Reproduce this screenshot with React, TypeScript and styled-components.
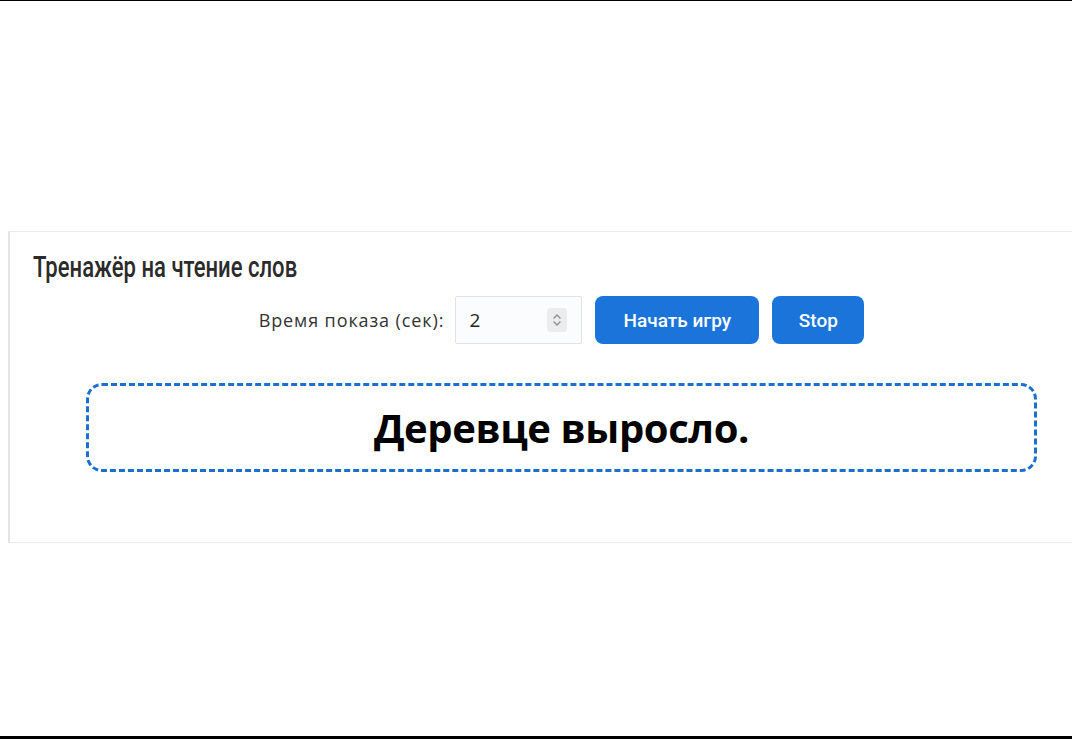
import React from "react";
import styled, {createGlobalStyle} from "styled-components";

const GlobalStyle = createGlobalStyle`
  html, body {
    margin: 0;
    padding: 0;
    background: #fff;
    overflow: hidden;
  }
`;

export default function App() {
    return (
    <Frame>
        <GlobalStyle />
        <Panel>
            <TitleRow>
                <Title>Тренажёр на чтение слов</Title>
            </TitleRow>
            <Controls>
                <Label htmlFor="show-time">Время показа (сек):</Label>
                <NumberBox>
                    <NumberValue id="show-time">2</NumberValue>
                    <Spinner>
                        <svg width="10" height="16" viewBox="0 0 10 16" fill="none" stroke="#8a8f96" strokeWidth="1.4" strokeLinecap="round" strokeLinejoin="round">
                            <path d="M2 6 L5 3 L8 6" />
                            <path d="M2 10 L5 13 L8 10" />
                        </svg>
                    </Spinner>
                </NumberBox>
                <Button $wide>Начать игру</Button>
                <Button>Stop</Button>
            </Controls>
            <WordBox>
                <Word>Деревце выросло.</Word>
            </WordBox>
        </Panel>
    </Frame>
    );
}

const Frame = styled.div`
    height: 739px;
    box-sizing: border-box;
    border-top: 1px solid #000;
    border-bottom: 3px solid #000;
    padding-top: 230px;
    padding-left: 8px;
    overflow: hidden;
`;

const Panel = styled.div`
    width: 1106px;
    box-sizing: border-box;
    border: 1px solid #ebebeb;
    border-left: 2px solid #e4e4e4;
    padding: 21px 0 70px;
    display: flex;
    flex-direction: column;
`;

const TitleRow = styled.div`
    padding-left: 23px;
    height: 29px;
`;

// no condensed face installed, so squeeze Roboto horizontally
const Title = styled.div`
    display: inline-block;
    font-family: Roboto, "Liberation Sans", sans-serif;
    font-weight: 500;
    font-size: 30px;
    line-height: 27px;
    color: #2b2b2b;
    transform: scaleX(0.735);
    transform-origin: left center;
    white-space: nowrap;
`;

const Controls = styled.div`
    display: flex;
    align-items: center;
    justify-content: center;
    margin-top: 14px;
    gap: 13px;
`;

const Label = styled.label`
    font-family: "Open Sans", "Noto Sans", sans-serif;
    font-size: 18px;
    letter-spacing: 0.9px;
    color: #333;
    margin-right: -2px;
`;

const NumberBox = styled.div`
    width: 127px;
    height: 48px;
    box-sizing: border-box;
    border: 1px solid #dfe4ea;
    border-radius: 2px;
    background: #fbfcfd;
    display: flex;
    align-items: center;
    justify-content: space-between;
    padding: 0 14px 0 13px;
`;

const NumberValue = styled.span`
    font-family: "Open Sans", "Noto Sans", sans-serif;
    font-size: 19px;
    color: #222;
`;

const Spinner = styled.span`
    width: 20px;
    height: 24px;
    border-radius: 4px;
    background: #ececee;
    display: flex;
    align-items: center;
    justify-content: center;
`;

const Button = styled.button<{$wide?: boolean}>`
    height: 48px;
    min-width: ${p => p.$wide ? 164 : 92}px;
    border: none;
    border-radius: 8px;
    background: #1b74da;
    color: #fff;
    font-family: Roboto, "Liberation Sans", Arial, sans-serif;
    font-weight: 500;
    font-size: 19px;
    padding: 0 20px;
    cursor: pointer;
`;

const WordBox = styled.div`
    margin: 39px 76px 0;
    height: 89px;
    box-sizing: border-box;
    border: 3px dashed #1a6fcf;
    border-radius: 16px;
    display: flex;
    align-items: center;
    justify-content: center;
`;

const Word = styled.div`
    font-family: "Open Sans", "Noto Sans", sans-serif;
    font-weight: 700;
    font-size: 40px;
    color: #000;
    letter-spacing: -0.4px;
`;
